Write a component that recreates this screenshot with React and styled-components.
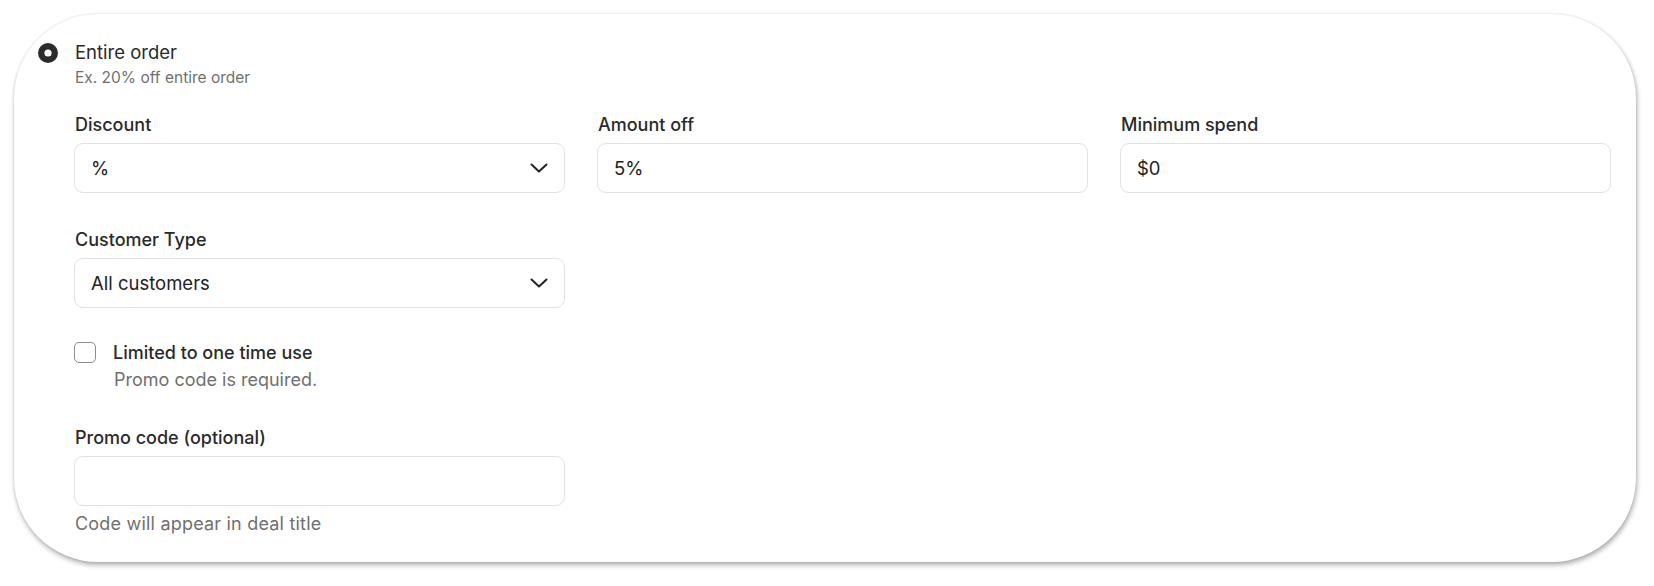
import React from "react";
import styled, { createGlobalStyle } from "styled-components";

const GlobalStyle = createGlobalStyle`
  * { box-sizing: border-box; }
  body {
    margin: 0;
    background: #ffffff;
    font-family: Inter, "Liberation Sans", sans-serif;
    color: #222222;
  }
`;

const Page = styled.div`
  padding: 14px 18px 24px 14px;
`;

const Card = styled.section`
  width: 1622px;
  height: 548px;
  background: #ffffff;
  border-radius: 84px;
  box-shadow: 1px 3px 5px rgba(0, 0, 0, 0.32), 0 0 2px rgba(0, 0, 0, 0.12);
  padding: 26px 22px 0 60px;
`;

const OptionRow = styled.div`
  display: flex;
  gap: 15px;
  margin-left: -36px;
`;

const RadioDot = styled.svg`
  flex: none;
  margin-top: 3px;
`;

const OptionText = styled.div`
  display: flex;
  flex-direction: column;
  gap: 4px;
  padding-left: 2px;
`;

const OptionTitle = styled.div`
  font-size: 18.5px;
  line-height: 24px;
  color: #2a2a2a;
  font-weight: 400;
`;

const OptionHint = styled.div`
  font-size: 15.5px;
  line-height: 20px;
  color: #6f6f6f;
`;

const FieldGrid = styled.div`
  display: grid;
  width: 1537px;
  grid-template-columns: repeat(3, 1fr);
  column-gap: 32px;
  margin-top: 25px;
`;

const Field = styled.div`
  display: flex;
  flex-direction: column;
  gap: 6px;
`;

const Label = styled.label`
  font-size: 18px;
  line-height: 24px;
  font-weight: 500;
  color: #2a2a2a;
  padding-left: 1px;
`;

const Box = styled.div`
  height: 50px;
  border: 1px solid #e2e2e2;
  border-radius: 9px;
  display: flex;
  align-items: center;
  justify-content: space-between;
  padding: 0 16px;
  font-size: 18.5px;
  color: #222222;
`;

const Section = styled.div`
  width: 491px;
  margin-top: ${(p) => p.$top}px;
`;

const CheckRow = styled.div`
  display: flex;
  gap: 17px;
  margin-top: 34px;
`;

const CheckBox = styled.span`
  flex: none;
  width: 22px;
  height: 21px;
  border: 1.5px solid #8a8b96;
  border-radius: 5px;
  margin-top: 1px;
`;

const CheckText = styled.div`
  display: flex;
  flex-direction: column;
  gap: 3px;
`;

const CheckTitle = styled.div`
  font-size: 18px;
  line-height: 24px;
  font-weight: 500;
  color: #2a2a2a;
`;

const Helper = styled.div`
  font-size: 18px;
  line-height: 24px;
  color: #707070;
  padding-left: 1px;
  letter-spacing: ${(p) => (p.$wide ? "0.2px" : "0")};
`;

const Chevron = () => (
  <svg width="18" height="10" viewBox="0 0 18 10" fill="none">
    <path d="M1.5 1.5 L9 8.5 L16.5 1.5" stroke="#222" strokeWidth="2" strokeLinecap="round" strokeLinejoin="round" />
  </svg>
);

const fields = [
  { label: "Discount", value: "%", select: true },
  { label: "Amount off", value: "5%" },
  { label: "Minimum spend", value: "$0" },
];

export default function App() {
  return (
    <>
      <GlobalStyle />
      <Page>
        <Card>
          <OptionRow>
            <RadioDot width="20" height="20" viewBox="0 0 20 20">
              <circle cx="10" cy="10" r="10" fill="#2b2b2b" />
              <circle cx="10" cy="10" r="3.6" fill="#ffffff" />
            </RadioDot>
            <OptionText>
              <OptionTitle>Entire order</OptionTitle>
              <OptionHint>Ex. 20% off entire order</OptionHint>
            </OptionText>
          </OptionRow>

          <FieldGrid>
            {fields.map(({ label, value, select }) => (
              <Field key={label}>
                <Label>{label}</Label>
                <Box>
                  <span>{value}</span>
                  {select && <Chevron />}
                </Box>
              </Field>
            ))}
          </FieldGrid>

          <Section $top={35}>
            <Field>
              <Label>Customer Type</Label>
              <Box>
                <span>All customers</span>
                <Chevron />
              </Box>
            </Field>
          </Section>

          <Section $top={-1}>
            <CheckRow>
              <CheckBox />
              <CheckText>
                <CheckTitle>Limited to one time use</CheckTitle>
                <Helper>Promo code is required.</Helper>
              </CheckText>
            </CheckRow>
          </Section>

          <Section $top={34}>
            <Field>
              <Label>Promo code (optional)</Label>
              <Box />
              <Helper $wide>Code will appear in deal title</Helper>
            </Field>
          </Section>
        </Card>
      </Page>
    </>
  );
}
